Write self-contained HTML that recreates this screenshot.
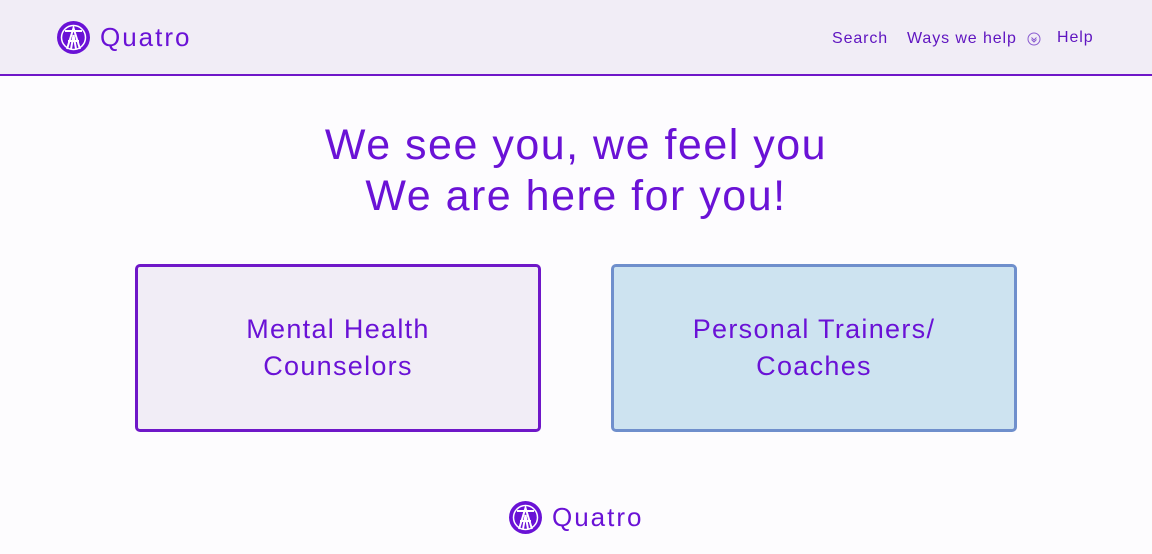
<!DOCTYPE html>
<html><head><meta charset="utf-8"><style>
*{margin:0;padding:0;box-sizing:border-box}
body{width:1152px;height:554px;overflow:hidden;background:#fdfcfe;font-family:"Liberation Sans",sans-serif;color:#6a12d6;position:relative}
.hdr{position:absolute;left:0;top:0;width:1152px;height:76px;background:#f1edf6;border-bottom:2px solid #6f17c8}
.logo{position:absolute;display:flex;align-items:center}
.logo span{font-size:26px;color:#6a12d6;margin-left:10px;letter-spacing:2px}
.nav{position:absolute;top:30px;font-size:16px;color:#5f14c0;letter-spacing:0.9px}
h1{position:absolute;top:120px;left:0;width:1152px;text-align:center;font-size:43px;font-weight:normal;line-height:51px;color:#6a12d6;letter-spacing:1.5px}
.card{position:absolute;top:264px;width:406px;height:168px;border-radius:5px;display:flex;align-items:center;justify-content:center;text-align:center;font-size:27px;line-height:37px;color:#6a12d6;letter-spacing:1.3px}
</style></head><body>
<div class="hdr">
<div class="logo" style="left:57px;top:21px">
<svg width="33" height="33" viewBox="0 0 33 33"><circle cx="16.5" cy="16.5" r="16.5" fill="#6a12d6"/><circle cx="16.5" cy="16.5" r="12" fill="none" stroke="#fff" stroke-width="1.5"/><path d="M10 28 L16.5 7 L23 28 M14 28 L16.5 14 L19 28 M8 10 H25 M11 20 H22" stroke="#fff" stroke-width="2" fill="none"/></svg>
<span>Quatro</span></div>
<div class="nav" style="left:832px">Search</div>
<div class="nav" style="left:907px">Ways we help</div>
<svg style="position:absolute;left:1027px;top:32px" width="14" height="14" viewBox="0 0 14 14"><circle cx="7" cy="7" r="6" fill="none" stroke="#8a5bd0" stroke-width="1"/><path d="M4.5 5.5L7 8L9.5 5.5M4.5 7.5L7 10L9.5 7.5" stroke="#8a5bd0" fill="none" stroke-width="1"/></svg>
<div class="nav" style="left:1057px;top:29px">Help</div>
</div>
<h1>We see you, we feel you<br>We are here for you!</h1>
<div class="card" style="left:135px;background:#f1edf6;border:3px solid #6f17c8">Mental Health<br>Counselors</div>
<div class="card" style="left:611px;background:#cde3f0;border:3px solid #6f8fcc">Personal Trainers/<br>Coaches</div>
<div class="logo" style="left:509px;top:501px">
<svg width="33" height="33" viewBox="0 0 33 33"><circle cx="16.5" cy="16.5" r="16.5" fill="#6a12d6"/><circle cx="16.5" cy="16.5" r="12" fill="none" stroke="#fff" stroke-width="1.5"/><path d="M10 28 L16.5 7 L23 28 M14 28 L16.5 14 L19 28 M8 10 H25 M11 20 H22" stroke="#fff" stroke-width="2" fill="none"/></svg>
<span>Quatro</span></div>
</body></html>
